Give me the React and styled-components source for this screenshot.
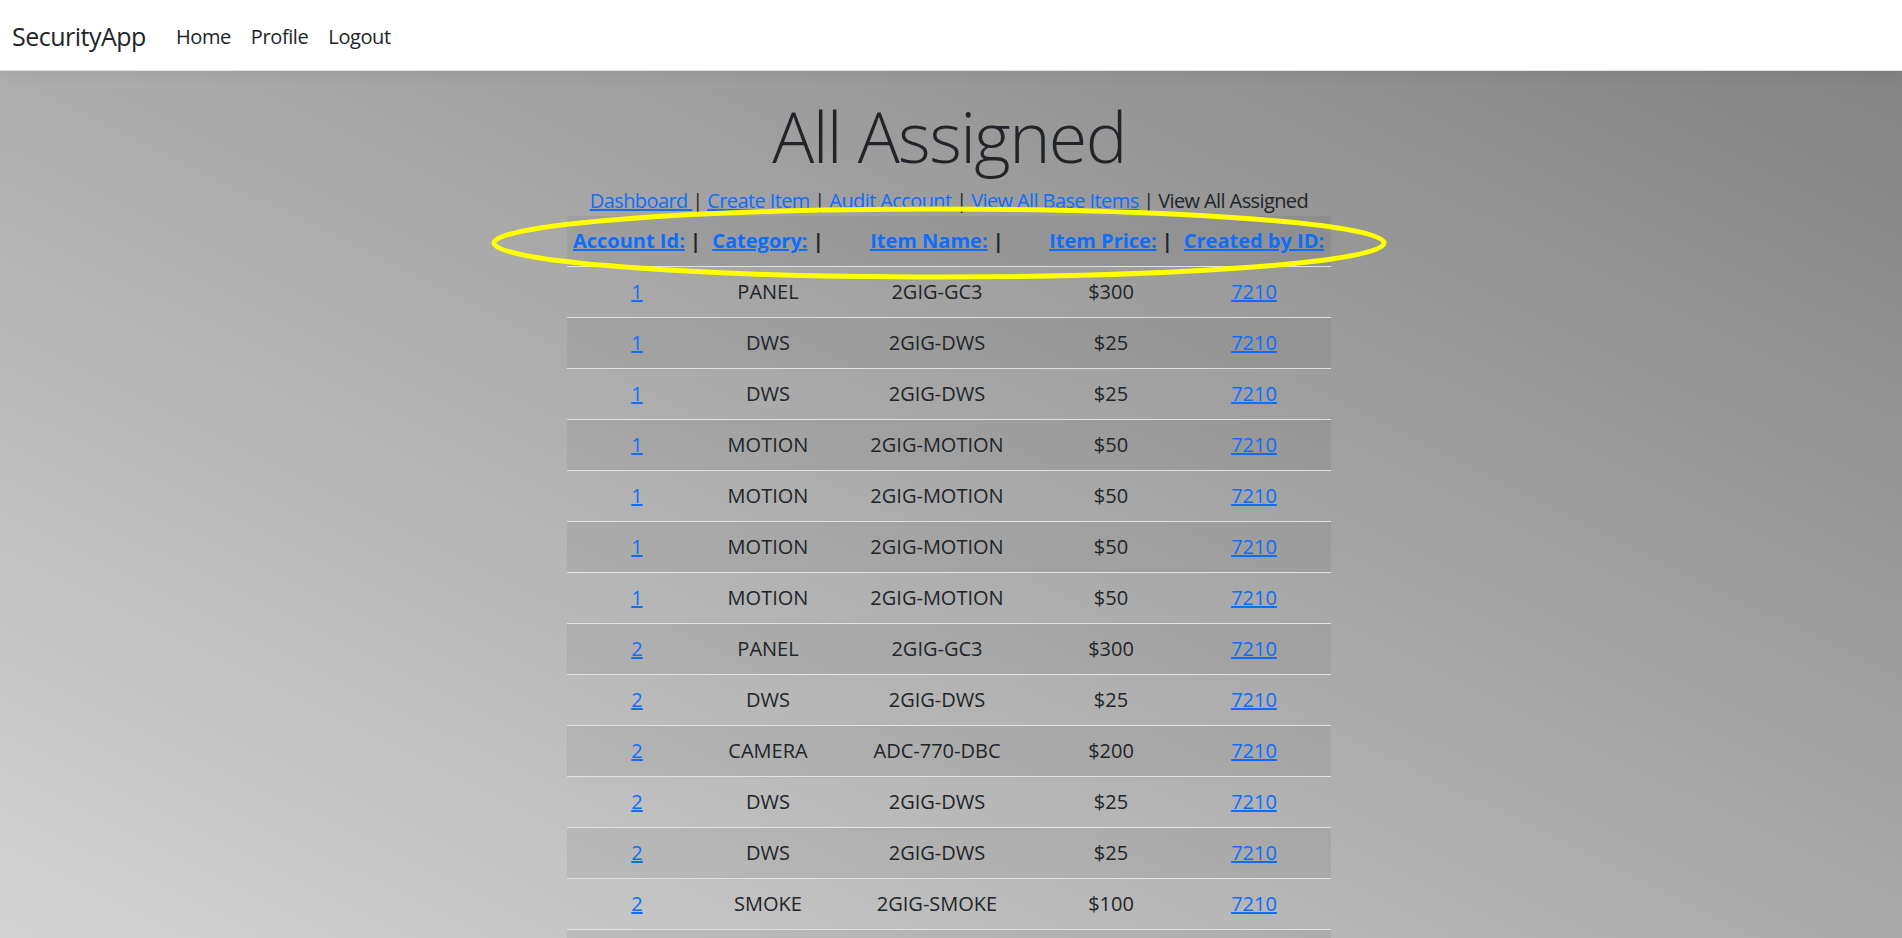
import styled, { createGlobalStyle } from "styled-components";

const GlobalStyle = createGlobalStyle`
    html {
        scrollbar-width: none;
    }
    html::-webkit-scrollbar {
        display: none;
    }
    body {
        margin: 0;
        font-family: "Open Sans", "Noto Sans", sans-serif;
        font-size: 20px;
        line-height: 1.5;
        color: #212529;
        background: linear-gradient(to top right, #d3d3d3, #808080) fixed;
        min-height: 100vh;
    }
    a {
        color: #0d6efd;
    }
`

///////////////////// NAVBAR /////////////////////
const Navbar = styled.nav`
    display: flex;
    align-items: center;
    box-sizing: border-box;
    height: 71px;
    padding: 3px 12px 0;
    background-color: #fff;
    border-bottom: 1px solid #dee2e6;
    box-shadow: 0 4px 12px rgba(0, 0, 0, 0.05);
`

const Brand = styled.a`
    font-size: 25px;
    line-height: 1.5;
    letter-spacing: -0.5px;
    color: #212529;
    text-decoration: none;
    margin-right: 20px;
`

const NavLink = styled.a`
    padding: 0 10px;
    font-size: 20px;
    line-height: 30px;
    letter-spacing: -0.4px;
    color: #212529;
    text-decoration: none;
`

///////////////////// PAGE /////////////////////
const Main = styled.main`
    display: flex;
    flex-direction: column;
    align-items: center;
    padding: 23px 4px 0 0;
`

const Title = styled.h1`
    margin: 0 0 8px;
    font-size: 70px;
    font-weight: 300;
    line-height: 84px;
    letter-spacing: -1.6px;
`

const Links = styled.p`
    margin: 0;
    font-size: 20px;
    line-height: 30px;
    letter-spacing: -0.6px;
`

const TableWrap = styled.div`
    position: relative;
`

const Table = styled.table`
    width: 764px;
    table-layout: fixed;
    border-collapse: collapse;
    text-align: center;

    tr:nth-child(odd) {
        background-color: rgba(0, 0, 0, 0.05);
    }
`

const Cell = styled.td`
    padding: 10px 0;
    line-height: 30px;
    border-bottom: 1px solid #dee2e6;
    font-weight: ${p => (p.$head ? "bold" : "normal")};
`

const Highlight = styled.svg`
    position: absolute;
    left: -80px;
    top: -12px;
    pointer-events: none;
`

const widths = [140, 122, 216, 132, 154];

const items = [
    [1, "PANEL", "2GIG-GC3", "$300"],
    [1, "DWS", "2GIG-DWS", "$25"],
    [1, "DWS", "2GIG-DWS", "$25"],
    [1, "MOTION", "2GIG-MOTION", "$50"],
    [1, "MOTION", "2GIG-MOTION", "$50"],
    [1, "MOTION", "2GIG-MOTION", "$50"],
    [1, "MOTION", "2GIG-MOTION", "$50"],
    [2, "PANEL", "2GIG-GC3", "$300"],
    [2, "DWS", "2GIG-DWS", "$25"],
    [2, "CAMERA", "ADC-770-DBC", "$200"],
    [2, "DWS", "2GIG-DWS", "$25"],
    [2, "DWS", "2GIG-DWS", "$25"],
    [2, "SMOKE", "2GIG-SMOKE", "$100"],
    [2, "MOTION", "2GIG-MOTION", "$50"],
    [2, "MOTION", "2GIG-MOTION", "$50"],
];

const headers = ["Account Id:", "Category:", "Item Name:", "Item Price:", "Created by ID:"];

export default function App() {
    return (
        <>
            <GlobalStyle />
            <Navbar>
                <Brand href="#">SecurityApp</Brand>
                <NavLink href="#">Home</NavLink>
                <NavLink href="#">Profile</NavLink>
                <NavLink href="#">Logout</NavLink>
            </Navbar>
            <Main>
                <Title>All Assigned</Title>
                <Links>
                    <a href="#">Dashboard </a>| <a href="#">Create Item</a> | <a href="#">Audit Account</a> | <a href="#">View All Base Items</a> | View All Assigned
                </Links>
                <TableWrap>
                    <Table>
                        <colgroup>
                            {widths.map((w, i) => <col key={i} style={{ width: w }} />)}
                        </colgroup>
                        <tbody>
                            <tr>
                                {headers.map((h, i) => (
                                    <Cell as="th" $head key={h}>
                                        <a href="#">{h}</a>{i < headers.length - 1 ? " |" : ""}
                                    </Cell>
                                ))}
                            </tr>
                            {items.map((item, i) => (
                                <tr key={i}>
                                    <Cell><a href="#">{item[0]}</a></Cell>
                                    <Cell>{item[1]}</Cell>
                                    <Cell>{item[2]}</Cell>
                                    <Cell>{item[3]}</Cell>
                                    <Cell><a href="#">7210</a></Cell>
                                </tr>
                            ))}
                        </tbody>
                    </Table>
                    <Highlight width="904" height="80" viewBox="0 0 904 80">
                        <ellipse cx="452" cy="39" rx="445" ry="34" fill="none" stroke="#ffff00" strokeWidth="5" />
                    </Highlight>
                </TableWrap>
            </Main>
        </>
    )
}
